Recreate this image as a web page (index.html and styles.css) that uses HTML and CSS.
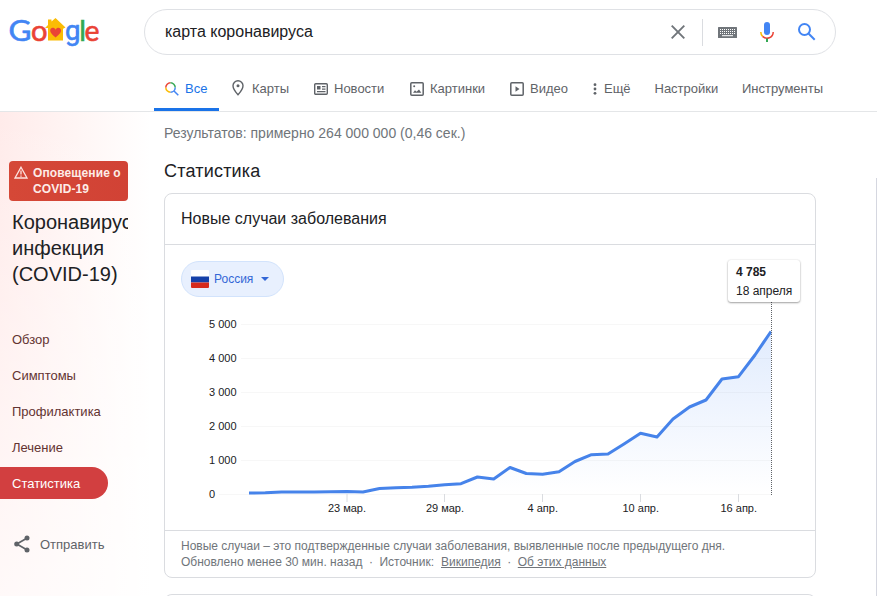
FILE: index.html
```html
<!DOCTYPE html>
<html lang="ru">
<head>
<meta charset="utf-8">
<title>карта коронавируса</title>
<link rel="stylesheet" href="styles.css">
</head>
<body>
<header class="header">
  <div class="search-row">
    <svg class="logo" width="92" height="36" viewBox="8 14 92 36">
      <g class="logo-text">
        <text x="8.600" y="40.500" fill="#4285f4" stroke="#4285f4" textLength="23" lengthAdjust="spacingAndGlyphs">G</text>
        <text x="31" y="40.500" fill="#ea4335" stroke="#ea4335" textLength="16.500" lengthAdjust="spacingAndGlyphs">o</text>
        <text class="round-g" x="65" y="40" fill="#4285f4" stroke="#4285f4" textLength="15.500" lengthAdjust="spacingAndGlyphs">g</text>
        <text x="79.300" y="40.500" fill="#34a853" stroke="#34a853">l</text>
        <text x="84.500" y="40.500" fill="#ea4335" stroke="#ea4335" textLength="15" lengthAdjust="spacingAndGlyphs">e</text>
      </g>
      <path fill="#fbbc04" d="M45 28 48 25V19.500h3.500v2L55.500 18 65.500 27.500 63 28.700V40.500H48V28z"/>
      <path fill="#ea4335" d="M55.600 37.500c-4.200-3.500-5.400-5.200-5.400-7 0-3.500 4.200-3.500 5.400-.8 1.200-2.700 5.400-2.700 5.400.8 0 2-1.400 3.500-5.400 7z"/>
    </svg>
    <div class="search-box">
      <span class="query">карта коронавируса</span>
      <svg class="clear" width="14" height="14" viewBox="0 0 14 14"><path d="M.7.7l12.600 12.600M13.300.7.7 13.300" stroke="#70757a" stroke-width="1.900"/></svg>
      <span class="divider"></span>
      <svg class="keyboard" width="19" height="11" viewBox="0 0 19 11"><rect width="19" height="11" rx=".5" fill="#70757a"/><path d="M2 2.500h15M2 4.500h15M2 6.500h15" stroke="#fff" stroke-width="1" stroke-dasharray="1 1"/><path d="M4 8.700h11" stroke="#fff"/></svg>
      <svg class="mic" width="14" height="20" viewBox="0 0 14 20"><rect x="4" y="0" width="6" height="13" rx="3" fill="#4285f4"/><path d="M.8 10c0 1.800.7 3.300 1.800 4.400" fill="none" stroke="#fbbc04" stroke-width="1.500"/><path d="M2.600 14.400A6.200 6.200 0 0 0 13.200 10" fill="none" stroke="#ea4335" stroke-width="1.500"/><path d="M7 16.500V20" stroke="#34a853" stroke-width="2"/></svg>
      <svg class="find" width="18" height="18" viewBox="0 0 18 18" fill="none" stroke="#4285f4" stroke-width="2"><circle cx="6.500" cy="6.500" r="5.500"/><path d="M10.500 10.500 16.700 16.700"/></svg>
    </div>
  </div>
  <nav class="tabs">
    <a class="tab active"><svg width="14" height="14" viewBox="0 0 14 14" fill="none" stroke-width="1.500"><path d="M5.500 10.200A4.700 4.700 0 0 1 .8 5.500" stroke="#fbbc04"/><path d="M.8 5.500A4.700 4.700 0 0 1 5.500.8" stroke="#ea4335"/><path d="M5.500.8A4.700 4.700 0 0 1 10.200 5.500" stroke="#34a853"/><path d="M10.200 5.500A4.700 4.700 0 0 1 5.500 10.200M9 9l4.300 4.300" stroke="#4285f4"/></svg><span>Все</span></a>
    <a class="tab maps"><svg width="12" height="16" viewBox="0 0 12 16"><path d="M6 .8A5 5 0 0 0 1 5.800C1 9.300 6 14.800 6 14.800s5-5.500 5-9A5 5 0 0 0 6 .8z" fill="none" stroke="#5f6368" stroke-width="1.400"/><circle cx="6" cy="5.800" r="1.500" fill="#5f6368"/></svg><span>Карты</span></a>
    <a class="tab news"><svg width="14" height="12" viewBox="0 0 14 12"><rect x=".7" y=".7" width="12.600" height="10.600" rx="1" fill="none" stroke="#5f6368" stroke-width="1.400"/><path d="M3 3h3.500v3.500H3zM8 3h3.500v1.300H8zM8 5.500h3.500v1.200H8zM3 8h8.500v1.300H3z" fill="#5f6368"/></svg><span>Новости</span></a>
    <a class="tab images"><svg width="14" height="14" viewBox="0 0 14 14"><rect x=".8" y=".8" width="12.400" height="12.400" rx="1" fill="none" stroke="#5f6368" stroke-width="1.500"/><path d="M3 10.800 5 8.300l1.500 1.500L9 7.500l2.300 3.300z" fill="#5f6368"/><circle cx="4.200" cy="4.300" r="1" fill="#5f6368"/></svg><span>Картинки</span></a>
    <a class="tab video"><svg width="14" height="14" viewBox="0 0 14 14"><rect x=".8" y=".8" width="12.400" height="12.400" rx="1" fill="none" stroke="#5f6368" stroke-width="1.500"/><path d="M5.500 4.200v5.600L9.500 7z" fill="#5f6368"/></svg><span>Видео</span></a>
    <a class="tab more"><svg width="4" height="12" viewBox="0 0 4 12" fill="#5f6368"><circle cx="2" cy="1.700" r="1.400"/><circle cx="2" cy="6" r="1.400"/><circle cx="2" cy="10.300" r="1.400"/></svg><span>Ещё</span></a>
    <a class="tab settings"><span>Настройки</span></a>
    <a class="tab tools"><span>Инструменты</span></a>
  </nav>
</header>
<div class="page">
  <aside class="sidebar">
    <div class="alert">
      <svg width="14" height="13" viewBox="0 0 14 13"><path d="M7 1.200 13 12H1z" fill="none" stroke="#fde3df" stroke-width="1.300"/><path d="M7 4.500v4M7 9.500v1.300" stroke="#fde3df" stroke-width="1.300"/></svg>
      <span>Оповещение о<br>COVID-19</span>
    </div>
    <h1 class="topic">Коронавирусная<br>инфекция<br>(COVID-19)</h1>
    <nav class="side-nav">
      <a>Обзор</a><a>Симптомы</a><a>Профилактика</a><a>Лечение</a><a class="current">Статистика</a>
    </nav>
    <a class="share"><svg width="16" height="18" viewBox="0 0 16 18"><path d="M13.200 3 2.800 9l10.400 6" fill="none" stroke="#5f6368" stroke-width="1.700"/><g fill="#5f6368"><circle cx="13" cy="3" r="2.500"/><circle cx="2.700" cy="9" r="2.500"/><circle cx="13" cy="15" r="2.500"/></g></svg><span>Отправить</span></a>
  </aside>
  <main class="results">
    <p class="count"><span>Результатов: примерно 264 000 000 (0,46 сек.)</span></p>
    <h2 class="section-title"><span>Статистика</span></h2>
    <section class="card">
      <h3 class="card-title"><span>Новые случаи заболевания</span></h3>
      <div class="chart-area">
        <button class="country"><svg width="18" height="18" viewBox="0 0 18 18"><rect width="18" height="18" rx="1" fill="#fff"/><path d="M0 6.500h18v6H0z" fill="#1540a8"/><path d="M0 12.500h18V17q0 1-1 1H1q-1 0-1-1z" fill="#d52b1e"/></svg><span>Россия</span><i class="caret"></i></button>
        <svg class="chart" width="650" height="230" viewBox="165 300 650 230">
          <defs><linearGradient id="area" x1="0" y1="0" x2="0" y2="1"><stop offset="0" stop-color="#4285f4" stop-opacity=".16"/><stop offset="1" stop-color="#4285f4" stop-opacity="0"/></linearGradient></defs>
          <path d="M241 324.500H771M241 358.500H771M241 392.500H771M241 426.500H771M241 460.500H771M219 494.500H771" stroke="#f7f7f7"/>
          <path d="M347 494v8M444.500 494v8M542.500 494v8M640.500 494v8M738.500 494v8" stroke="#dadce0"/>
          <path fill="url(#area)" d="M249 493L265.300 492.800 281.600 492 298 492 314.200 492 330.600 491.800 347 491.500 363 492 379.500 488.500 396 487.700 412 487.200 428.400 486.200 444.700 484.800 461 483.700 477.400 477 493.700 479 510 467.500 526.300 473.500 542.600 474.200 559 471.800 575 461.500 591.500 454.700 608 454 624 444 640.500 433.300 657 437 673 419 689.500 407 706 400 722 379 738.500 376.700 755 355 771 331.500V494H249z"/>
          <path fill="none" stroke="#4683ea" stroke-width="3" stroke-linejoin="round" d="M249 493L265.300 492.800 281.600 492 298 492 314.200 492 330.600 491.800 347 491.500 363 492 379.500 488.500 396 487.700 412 487.200 428.400 486.200 444.700 484.800 461 483.700 477.400 477 493.700 479 510 467.500 526.300 473.500 542.600 474.200 559 471.800 575 461.500 591.500 454.700 608 454 624 444 640.500 433.300 657 437 673 419 689.500 407 706 400 722 379 738.500 376.700 755 355 771 331.500"/>
          <path d="M771.500 300V495" stroke="#5f6368" stroke-dasharray="1 1"/>
          <g class="axis">
            <text x="209" y="328" textLength="27.500">5 000</text><text x="209" y="362" textLength="27.500">4 000</text><text x="209" y="396" textLength="27.500">3 000</text><text x="209" y="430" textLength="27.500">2 000</text><text x="209" y="464" textLength="27.500">1 000</text><text x="209" y="498">0</text>
            <text x="328" y="512" textLength="38">23 мар.</text><text x="426" y="512" textLength="38">29 мар.</text><text x="527.500" y="512" textLength="30.500">4 апр.</text><text x="622.500" y="512" textLength="36.500">10 апр.</text><text x="720.500" y="512" textLength="36.500">16 апр.</text>
          </g>
        </svg>
        <div class="tooltip"><b>4 785</b><span>18 апреля</span></div>
      </div>
      <footer class="note">
        <div><span class="note-line">Новые случаи – это подтвержденные случаи заболевания, выявленные после предыдущего дня.</span></div>
        <div class="sources"><span>Обновлено менее 30 мин. назад</span><i>·</i><span>Источник:</span><a class="wiki">Википедия</a><i>·</i><a>Об этих данных</a></div>
      </footer>
    </section>
    <section class="card next-card"></section>
  </main>
  <div class="rail"></div>
</div>
</body>
</html>
```
FILE: styles.css
```css
* { box-sizing: border-box; }
body { margin: 0; width: 877px; height: 596px; overflow: hidden; background: #fff; color: #202124; font-family: "Liberation Sans", Arial, sans-serif; display: flex; flex-direction: column; }
h1, h2, h3, p { margin: 0; font-weight: 400; }
svg { display: block; flex: none; }
.header { height: 112px; flex: none; border-bottom: 1px solid #e4e6e8; display: flex; flex-direction: column; }
.search-row { display: flex; height: 66px; padding: 9px 0 0 8px; }
.logo { margin: 5px 44px 0 0; }
.logo-text { font: 28.500px Lato, sans-serif; stroke-width: .6px; }
.logo-text .round-g { font-family: Roboto, sans-serif; font-size: 27px; }
.search-box { width: 692px; height: 46px; border: 1px solid #dfe1e5; border-radius: 23px; display: flex; align-items: center; padding-left: 20px; }
.query { font-size: 16px; width: 506px; }
.divider { width: 1px; height: 27px; background: #dadce0; margin: 0 15px 0 17px; }
.mic { margin: 0 24px 0 23px; }
.tabs { flex: 1; display: flex; padding-left: 154px; font-size: 13px; color: #5f6368; }
.tab { display: flex; align-items: center; height: 45px; white-space: nowrap; }
.active { width: 65px; padding-left: 11px; gap: 6px; color: #1a73e8; border-bottom: 3px solid #1a73e8; padding-top: 3px; }
.maps { width: 82px; margin-left: 13px; gap: 8px; }
.maps svg { margin-bottom: 2px; }
.news { width: 96px; gap: 6px; }
.images { width: 100px; gap: 6px; }
.video { width: 83px; gap: 6px; }
.more { width: 61.5px; gap: 7px; }
.settings { width: 87.5px; }
.page { flex: 1; display: flex; min-height: 0; overflow: hidden; }
.sidebar { width: 164px; background: linear-gradient(to bottom, rgba(255,255,255,0), rgba(255,255,255,.7)), linear-gradient(to right, #ffebea 0, #fff6f5 50%, #fff 92%); padding-top: 49px; }
.alert { width: 119px; height: 40px; margin-left: 9px; border-radius: 4px; background: linear-gradient(90deg, #d54837, #d14235); color: #fdece8; display: flex; gap: 5px; padding: 4px 0 0 5px; font: bold 12px/16px "Liberation Sans", sans-serif; letter-spacing: .1px; white-space: nowrap; }
.alert svg { margin-top: 1px; }
.topic { width: 116px; height: 78px; margin: 8px 0 0 12px; font-size: 20px; line-height: 26px; overflow: hidden; white-space: nowrap; }
.side-nav { margin-top: 36px; display: flex; flex-direction: column; gap: 4px; }
.side-nav a { width: 108px; height: 32px; padding-left: 12px; font-size: 13px; line-height: 33px; color: #633331; }
.side-nav .current { background: #d23f40; color: #fff; border-radius: 0 16px 16px 0; }
.share { display: flex; align-items: center; gap: 10px; margin: 36px 0 0 14px; font-size: 13px; color: #5f6368; }
.results { width: 652px; }
.count { height: 43px; line-height: 43px; font-size: 14px; color: #70757a; }
.section-title { height: 38px; line-height: 32px; font-size: 18px; letter-spacing: .2px; }
.card { height: 385px; border: 1px solid #dadce0; border-radius: 8px; }
.card-title { height: 51px; line-height: 50px; padding-left: 16px; font-size: 16px; border-bottom: 1px solid #dadce0; }
.chart-area { height: 285px; position: relative; padding-top: 16px; }
.country { width: 103px; height: 36px; margin-left: 16px; border: 1px solid #d2e3fc; border-radius: 18px; background: #e8f0fe; color: #3367d6; font: 12px "Liberation Sans", sans-serif; display: flex; align-items: center; padding: 0 0 0 9px; }
.country span { margin: 0 8px 0 5px; }
.caret { border: 4px solid transparent; border-top: 4px solid #3367d6; border-bottom: 0; margin-bottom: 1px; }
.chart { margin-top: 3px; }
.axis { font: 11px "Liberation Sans", sans-serif; fill: #202124; }
.tooltip { position: absolute; left: 563px; top: 15px; width: 72px; height: 42px; padding: 3px 0 0 8px; background: #fff; border-radius: 3px; box-shadow: 0 1px 2px rgba(0,0,0,.35), 0 0 2px rgba(0,0,0,.12); font-size: 12px; line-height: 19px; display: flex; flex-direction: column; white-space: nowrap; }
.note { border-top: 1px solid #dadce0; padding: 7px 0 0 16px; font-size: 12px; line-height: 16px; color: #70757a; white-space: nowrap; }
.sources { display: flex; }
.sources i { font-style: normal; width: 17px; text-align: center; }
.sources a { text-decoration: underline; }
.sources .wiki { margin-left: 7px; }
.next-card { margin-top: 16px; height: 20px; border-bottom: 0; border-radius: 8px 8px 0 0; }
.rail { width: 1px; margin: 66px 0 0 60px; background: #d5d7e0; }
```
